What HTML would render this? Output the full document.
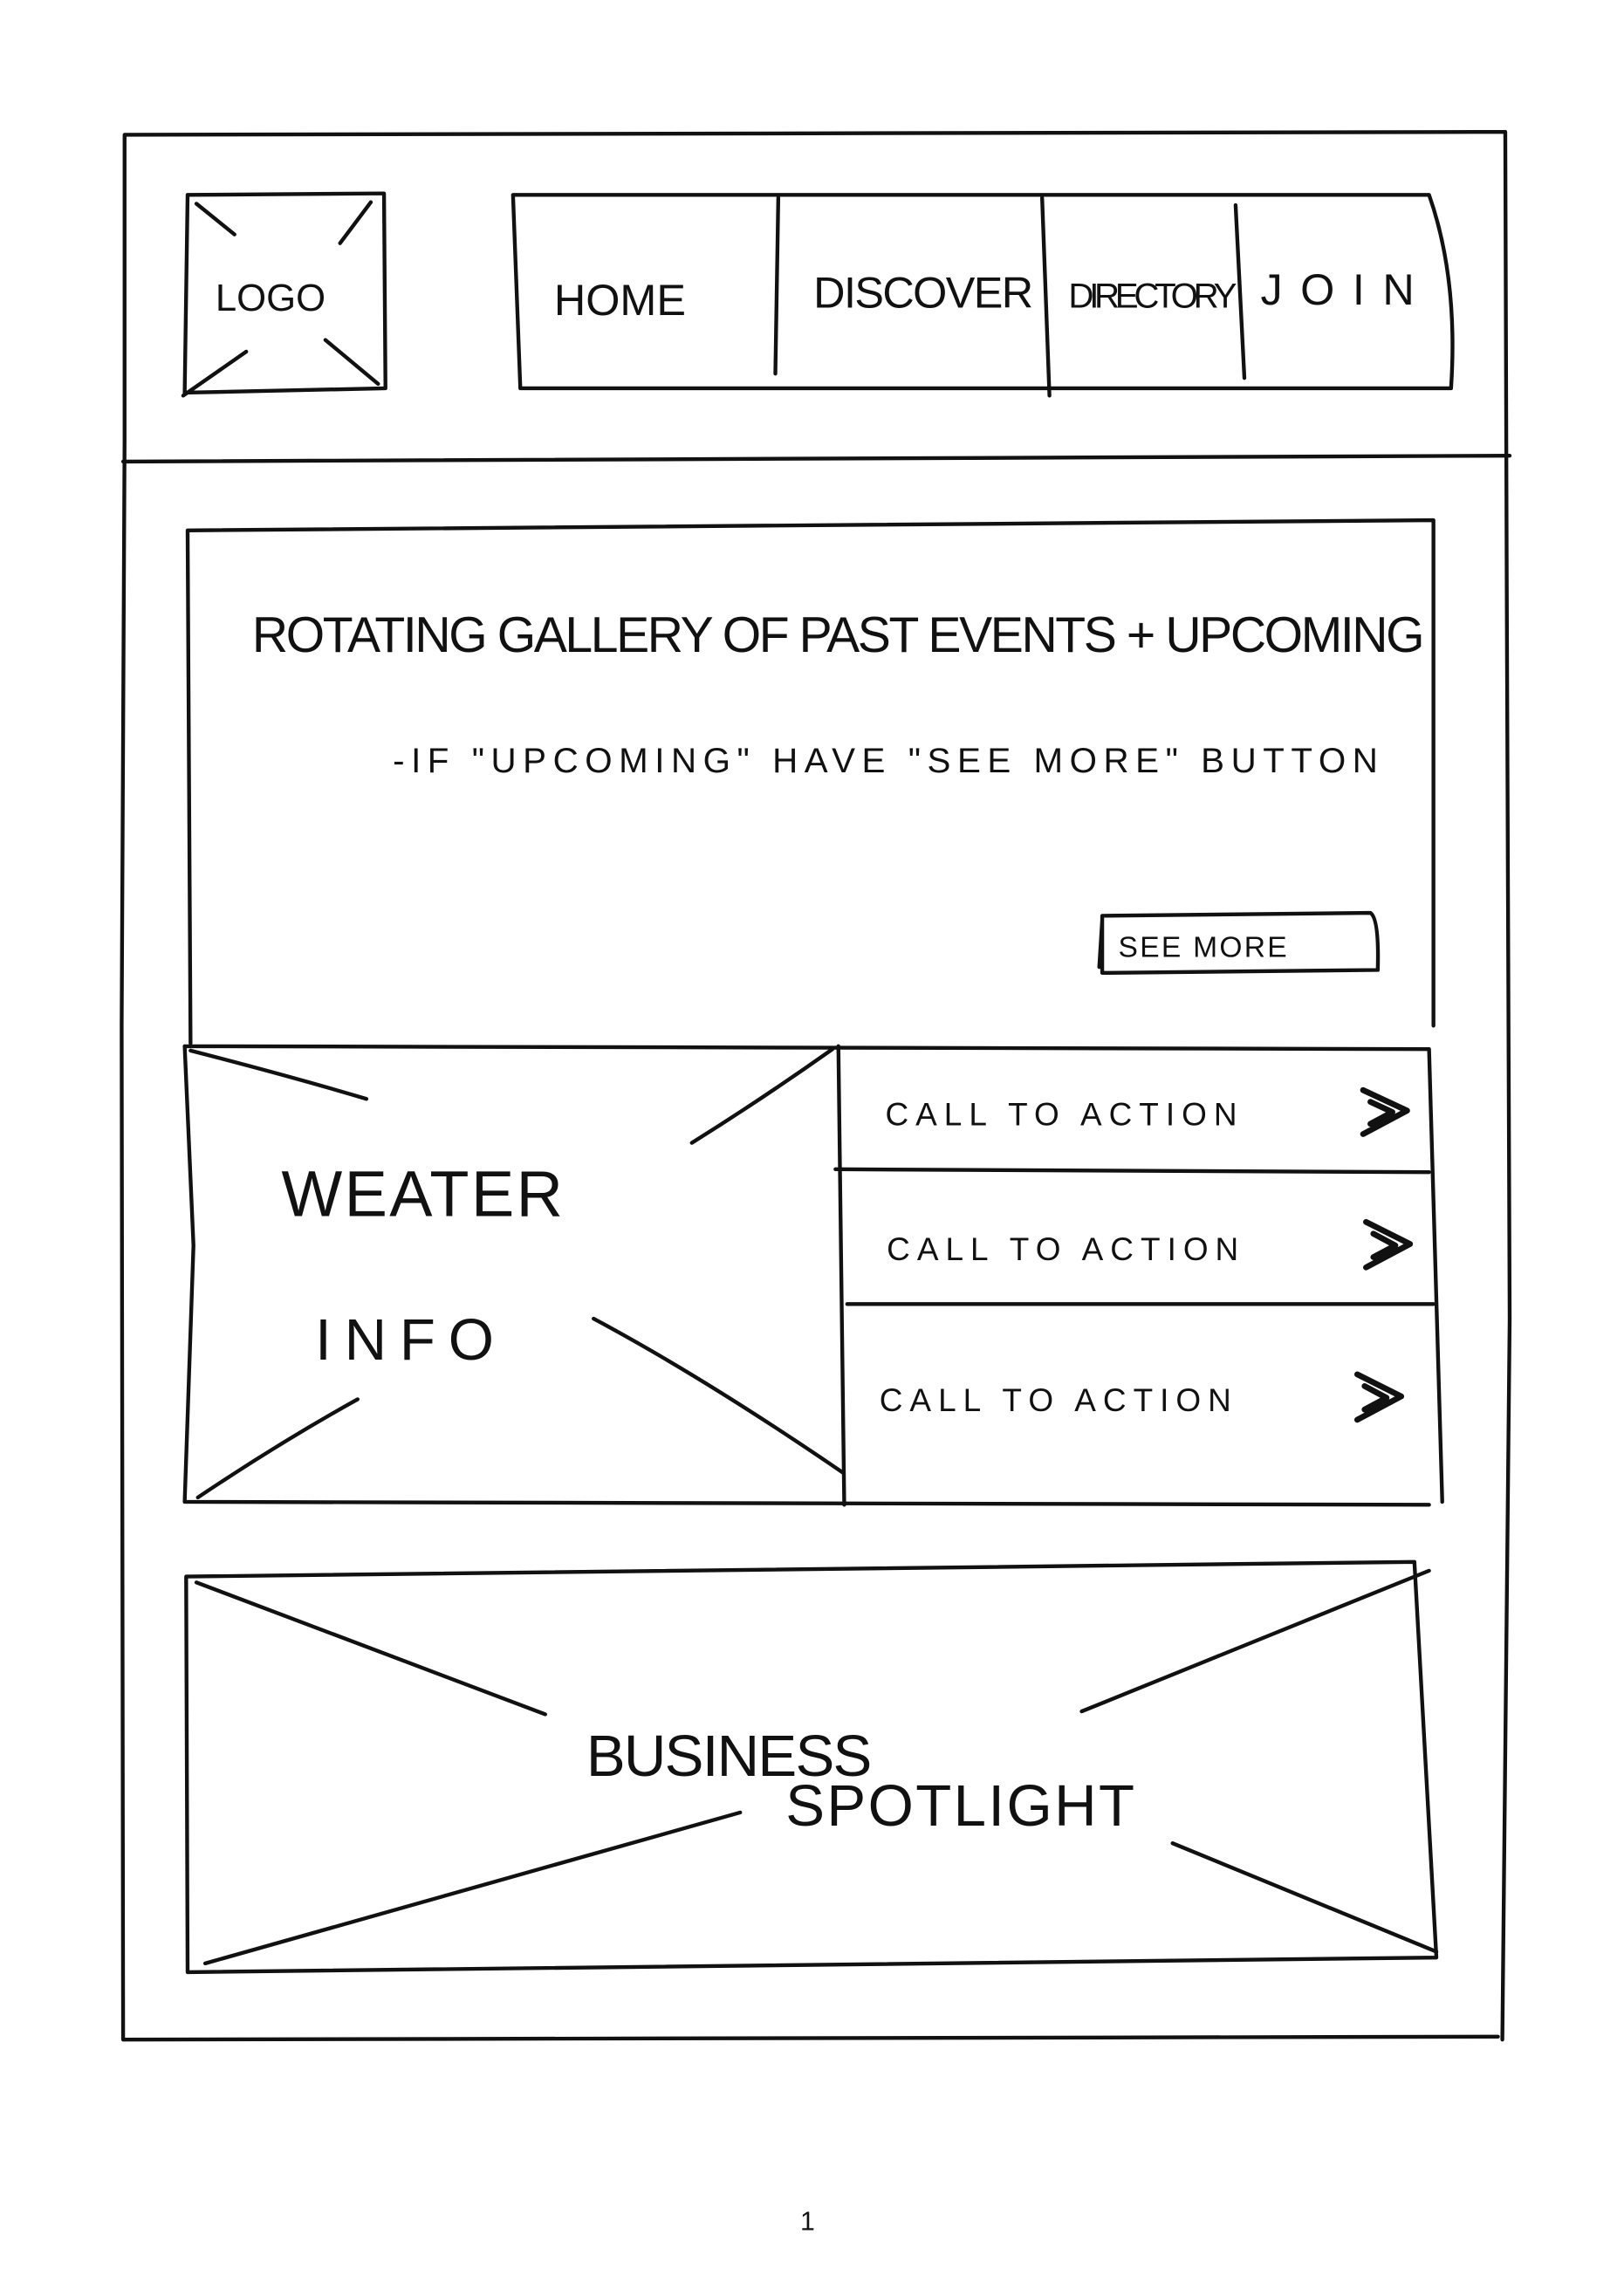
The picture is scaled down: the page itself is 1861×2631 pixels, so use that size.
<!DOCTYPE html>
<html><head><meta charset="utf-8"><style>
html,body{margin:0;padding:0;background:#fff;}
svg{display:block;}
text{font-family:"Liberation Sans",sans-serif;fill:#111;}
</style></head><body>
<svg width="1861" height="2631" viewBox="0 0 1108 1567" preserveAspectRatio="none" xmlns="http://www.w3.org/2000/svg">
<g fill="none" stroke="#111" stroke-width="2.6" stroke-linecap="round" stroke-linejoin="round">
<path d="M85 92 L1027 90 M85 92 L85 300 L83 700 L84 1392 M84 1392 L1022 1390 M1027 90 L1028 400 L1030 900 L1025 1392"/>
<path d="M84 315 L1030 311"/>
<path d="M128 133 L262 132 L263 265 L126 268 Z"/>
<path d="M134 139 L160 160 M253 138 L232 166 M125 270 L168 240 M222 232 L258 262"/>
<path d="M350 133 L975 133 Q995 190 990 265 L355 265 Z"/>
<path d="M531 135 L529 255 M711 135 L716 270 M843 140 L849 258"/>
<path d="M128 362 L978 355 L978 700 M128 362 L130 712"/>
<path d="M752 625 L935 623 Q941 627 940 662 L752 664 Z M752 628 L750 660"/>
<path d="M126 714 L975 716 L984 1025 M126 714 L132 850 L126 1025 L975 1027"/>
<path d="M572 714 L576 1027"/>
<path d="M570 798 L975 800 M578 890 L978 890"/>
<path d="M130 717 Q200 735 250 750 M472 780 Q520 750 568 716 M405 900 Q480 940 575 1005 M244 955 Q190 985 135 1022"/>
<g stroke-width="4"><path d="M930 744 L960 758 L930 774 M935 752 L950 759 L935 767"/>
<path d="M932 834 L962 849 L932 865 M937 842 L952 850 L937 858"/>
<path d="M926 938 L956 953 L926 969 M931 946 L946 954 L931 962"/></g>
<path d="M127 1076 L965 1066 L980 1336 L128 1346 Z"/>
<path d="M134 1080 L372 1170 M975 1072 L738 1168 M140 1340 L505 1237 M800 1258 L980 1332"/>
</g>
<g font-size="30">
<text x="147" y="212" font-size="26">LOGO</text>
<text x="378" y="215" font-size="30">HOME</text>
<text x="555" y="210" font-size="30" textLength="150">DISCOVER</text>
<text x="729" y="210" font-size="24" textLength="115">DIRECTORY</text>
<text x="860" y="208" font-size="30" textLength="105">JOIN</text>
<text x="172" y="445" font-size="34" textLength="800">ROTATING GALLERY  OF  PAST EVENTS + UPCOMING</text>
<text x="268" y="527" font-size="24" textLength="672">-IF "UPCOMING" HAVE "SEE MORE" BUTTON</text>
<text x="763" y="653" font-size="20" textLength="115">SEE MORE</text>
<text x="192" y="830" font-size="44" textLength="192">WEATER</text>
<text x="215" y="928" font-size="40" textLength="122">INFO</text>
<g font-size="22"><text x="604" y="768" textLength="240">CALL TO   ACTION</text>
<text x="605" y="860" textLength="240">CALL TO   ACTION</text>
<text x="600" y="963" textLength="240">CALL TO   ACTION</text></g>
<text x="400" y="1212" font-size="40" textLength="195">BUSINESS</text>
<text x="536" y="1246" font-size="40" textLength="238">SPOTLIGHT</text>
<text x="546" y="1522" font-size="18">1</text>
</g>
</svg>
</body></html>
